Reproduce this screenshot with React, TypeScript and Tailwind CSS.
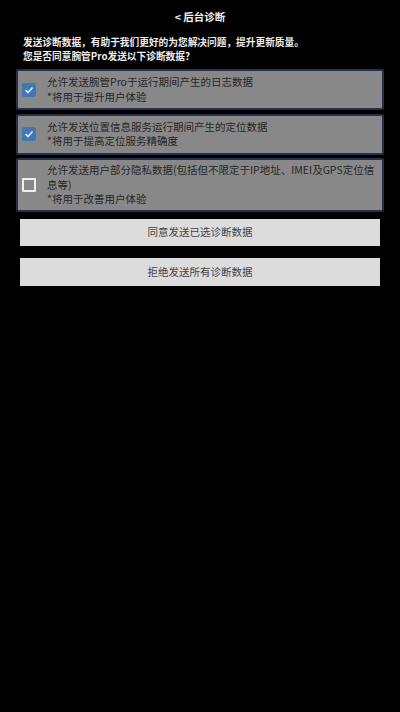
import React, { useState } from "react";

const options = [
  {
    title: "允许发送腕管Pro于运行期间产生的日志数据",
    note: "*将用于提升用户体验",
    checked: true,
  },
  {
    title: "允许发送位置信息服务运行期间产生的定位数据",
    note: "*将用于提高定位服务精确度",
    checked: true,
  },
  {
    title: "允许发送用户部分隐私数据(包括但不限定于IP地址、IMEI及GPS定位信息等)",
    note: "*将用于改善用户体验",
    checked: false,
  },
];

function CheckBox({ checked, onClick }: { checked: boolean; onClick: () => void }) {
  if (checked) {
    return (
      <button
        onClick={onClick}
        className="w-[14px] h-[14px] shrink-0 rounded-[2px] bg-[#3f78b5] flex items-center justify-center"
      >
        <svg width="10" height="10" viewBox="0 0 10 10">
          <path d="M1.5 5.2 L4 7.5 L8.5 2.5" fill="none" stroke="#dfe8f2" strokeWidth="1.6" />
        </svg>
      </button>
    );
  }
  return (
    <button
      onClick={onClick}
      className="w-[14px] h-[14px] shrink-0 border-2 border-[#eeeeee] rounded-[1px]"
    />
  );
}

export default function App() {
  const [checks, setChecks] = useState(options.map((o) => o.checked));

  return (
    <div className="w-[400px] h-[712px] bg-black font-['Noto_Sans_CJK_SC',sans-serif] pt-[9px]">
      <div className="text-center text-[10.5px] font-bold text-[#f2f2f2] leading-[16px]">
        &lt; 后台诊断
      </div>
      <div className="px-[23px] mt-[10px] text-[9.7px] font-bold text-[#eeeeee] leading-[14px]">
        <p>发送诊断数据，有助于我们更好的为您解决问题，提升更新质量。</p>
        <p>您是否同意腕管Pro发送以下诊断数据?</p>
      </div>
      <div className="px-[16px] mt-[6px] flex flex-col gap-[3.5px]">
        {options.map((o, i) => (
          <div
            key={i}
            className="flex items-center gap-[11px] pl-[4px] pr-[2px] py-[3px] bg-[#888888] border-2 border-[#26304a] rounded-[2px] min-h-[41px]"
          >
            <CheckBox
              checked={checks[i]}
              onClick={() => setChecks((c) => c.map((v, j) => (j === i ? !v : v)))}
            />
            <div className="text-[10.5px] leading-[14.5px] text-[#262626]">
              <p>{o.title}</p>
              <p>{o.note}</p>
            </div>
          </div>
        ))}
      </div>
      <div className="px-[20px] mt-[7px] flex flex-col gap-[12px]">
        <button className="h-[27px] bg-[#dcdcdc] text-[10.5px] text-[#444444]">同意发送已选诊断数据</button>
        <button className="h-[28px] bg-[#dcdcdc] text-[10.5px] text-[#444444]">拒绝发送所有诊断数据</button>
      </div>
    </div>
  );
}
